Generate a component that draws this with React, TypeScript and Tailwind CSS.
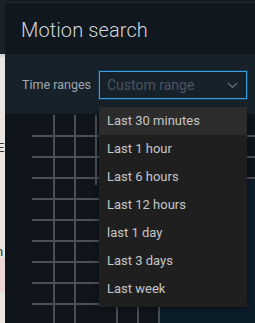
import React from "react";

const items = [
  "Last 30 minutes",
  "Last 1 hour",
  "Last 6 hours",
  "Last 12 hours",
  "last 1 day",
  "Last 3 days",
  "Last week",
];

function Grid() {
  const hs = [135, 156, 177, 198, 219, 240, 261, 282, 303];
  const vs = [53, 74, 116, 137, 158];
  return (
    <svg className="absolute left-0 top-0" width="255" height="323" viewBox="0 0 255 323">
      <rect x="160" y="180" width="95" height="143" fill="#0c1d2a" />
      {hs.map((y, i) => (
        <rect key={"h" + i} x="32" y={y} width={i < 3 ? 223 : 127} height="2" fill="#4a4f56" />
      ))}
      {vs.map((x, i) => (
        <rect key={"v" + i} x={x} y="115" width="2" height="208" fill="#4a4f56" />
      ))}
      <rect x="95" y="115" width="2" height="70" fill="#4a4f56" />
    </svg>
  );
}

export default function App() {
  return (
    <div
      className="relative w-[255px] h-[323px] overflow-hidden flex bg-[#0f151b]"
      style={{ fontFamily: "Roboto, 'Noto Sans', sans-serif" }}
    >
      {/* page behind the modal */}
      <div className="relative w-[5px] h-full flex flex-col overflow-hidden">
        <div className="h-[54px] bg-[#1b2128]" />
        <div className="h-[3px] bg-[#d6d6d6]" />
        <div className="flex-1 bg-[#ebe5df] relative">
          <div className="absolute left-[-3px] top-[84px] text-[13px] leading-none text-[#333]">E</div>
          <div className="absolute left-[-4px] top-[188px] text-[13px] leading-none text-[#333]">n</div>
          <div className="absolute left-0 top-[201px] w-full h-[34px] bg-[#efd6d4]" />
        </div>
      </div>

      {/* modal */}
      <div className="relative flex-1 flex flex-col">
        <div className="h-[3px] bg-[#141a21] border-b border-[#222a32]" />
        <div className="h-[51px] bg-[#10171e] flex items-center pl-[16px] pt-[3px]">
          <span className="text-[20px] font-light text-[#d2d6da] tracking-[0.1px]">Motion search</span>
        </div>
        <div className="h-[60px] bg-[#17212a] flex items-start pt-[17px] pl-[17px]">
          <span className="text-[12.5px] leading-[28px] text-[#a0a7ae] w-[77px]">Time ranges</span>
          <div className="w-[148px] h-[28px] border border-[#3a9ee4] shadow-[0_0_0_1px_#173a55] bg-[#17212a] flex items-center justify-between pl-[7px] pr-[8px]">
            <span className="text-[14px] text-[#4a555f]">Custom range</span>
            <svg width="11" height="7" viewBox="0 0 11 7" fill="none">
              <path d="M1 1l4.5 4.5L10 1" stroke="#66717b" strokeWidth="1.2" />
            </svg>
          </div>
        </div>
        <div className="relative flex-1 bg-[#0f151b]" />
      </div>

      <Grid />

      {/* dropdown */}
      <div className="absolute left-[99px] top-[107px] w-[148px] h-[200px] bg-[#1f1f1f] shadow-[0_2px_6px_rgba(0,0,0,0.4)] flex flex-col">
        {items.map((t, i) => (
          <div
            key={t}
            className={
              "h-[28px] flex items-center pl-[8px] text-[13px] text-[#c6c6c6] " +
              (i === 0 ? "bg-[#2c2c2c]" : "")
            }
          >
            {t}
          </div>
        ))}
      </div>
    </div>
  );
}
